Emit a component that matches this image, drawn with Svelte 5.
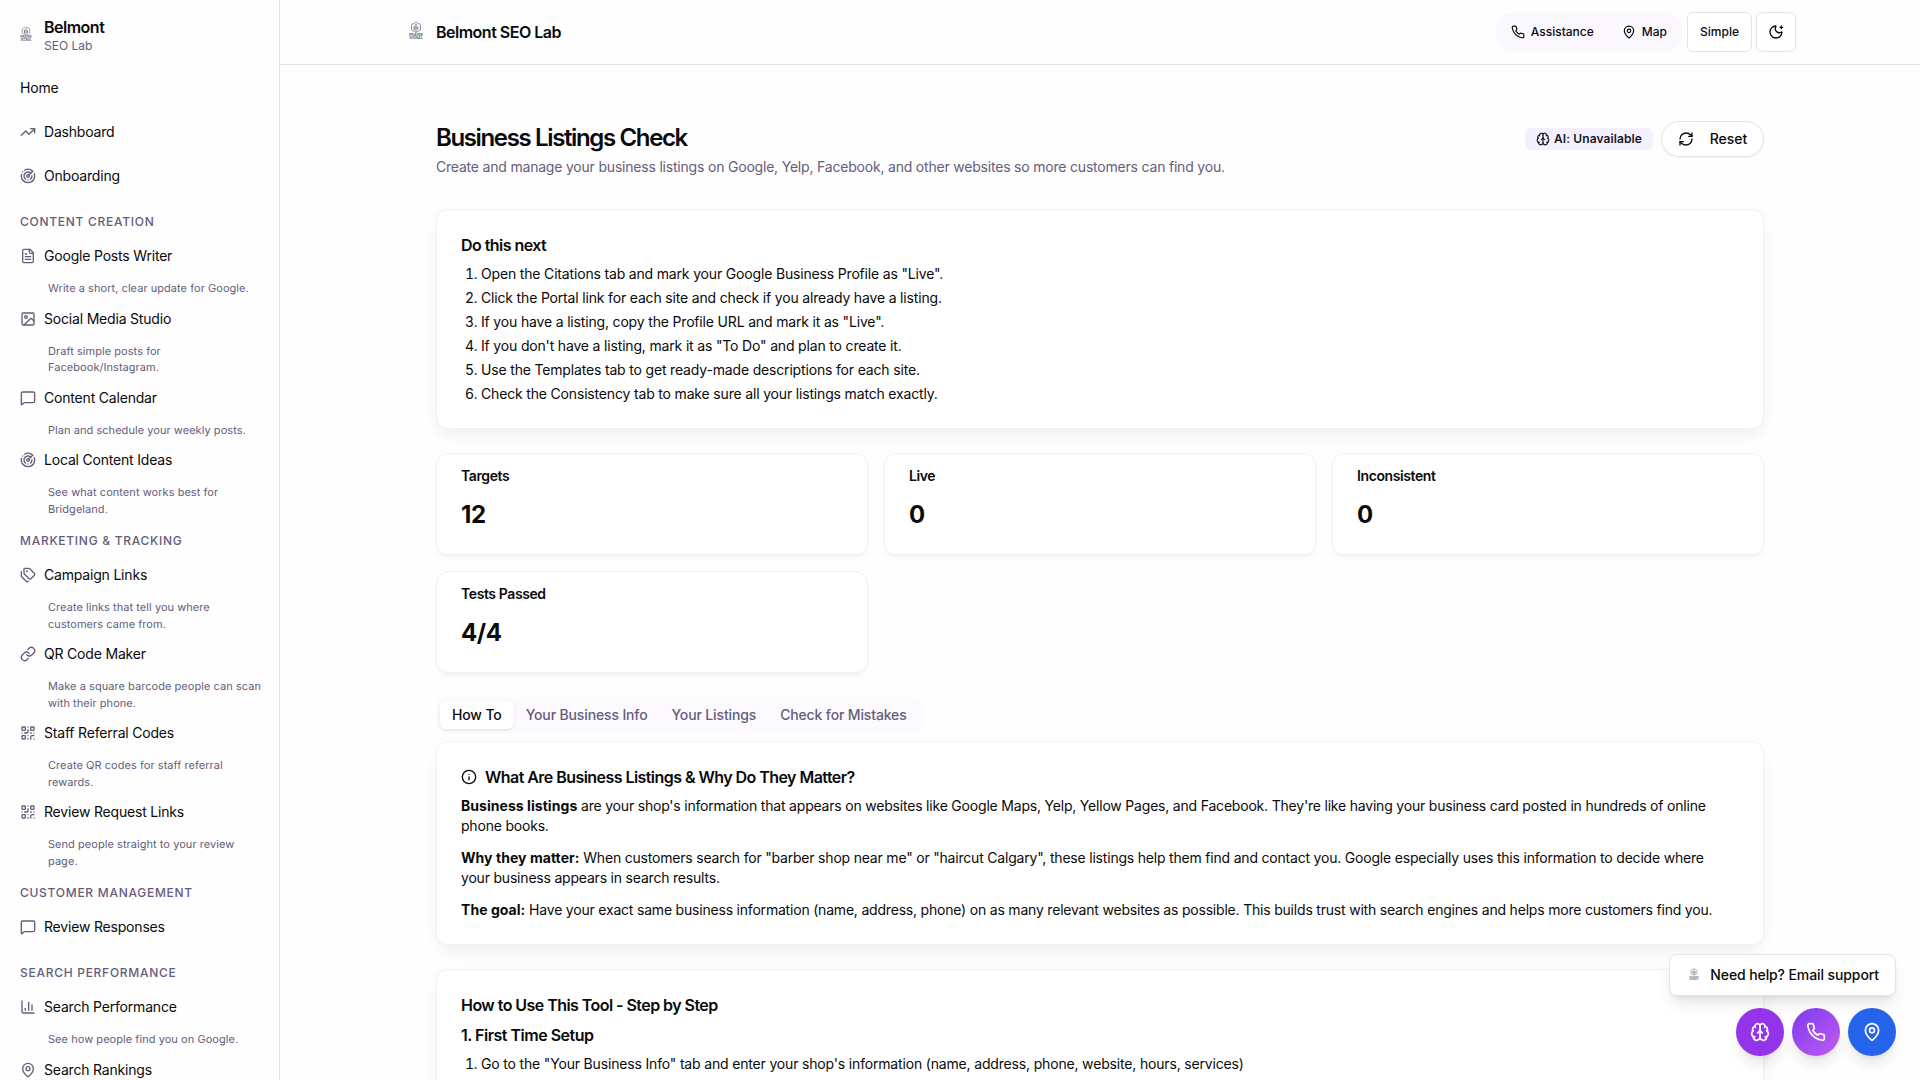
<script>
  const icons = {
    trend: '<path d="M16 7h6v6"/><path d="m22 7-8.5 8.5-5-5L2 17"/>',
    radar: '<path d="M19.07 4.93A10 10 0 0 0 6.99 3.34"/><path d="M4 6h.01"/><path d="M2.29 9.62A10 10 0 1 0 21.31 8.35"/><path d="M16.24 7.76A6 6 0 1 0 8.23 16.67"/><path d="M12 18h.01"/><path d="M17.99 11.66A6 6 0 0 1 15.77 16.67"/><circle cx="12" cy="12" r="2"/><path d="m13.41 10.59 5.66-5.66"/>',
    file: '<path d="M15 2H6a2 2 0 0 0-2 2v16a2 2 0 0 0 2 2h12a2 2 0 0 0 2-2V7Z"/><path d="M14 2v4a2 2 0 0 0 2 2h4"/><path d="M10 9H8"/><path d="M16 13H8"/><path d="M16 17H8"/>',
    image: '<rect width="18" height="18" x="3" y="3" rx="2"/><circle cx="9" cy="9" r="2"/><path d="m21 15-3.086-3.086a2 2 0 0 0-2.828 0L6 21"/>',
    message: '<path d="M22 17a2 2 0 0 1-2 2H6.828a2 2 0 0 0-1.414.586l-2.202 2.202A.71.71 0 0 1 2 21.286V5a2 2 0 0 1 2-2h16a2 2 0 0 1 2 2z"/>',
    tags: '<path d="M13.172 2a2 2 0 0 1 1.414.586l6.71 6.71a2.4 2.4 0 0 1 0 3.408l-4.592 4.592a2.4 2.4 0 0 1-3.408 0l-6.71-6.71A2 2 0 0 1 6 9.172V3a1 1 0 0 1 1-1z"/><path d="M2 7v6.172a2 2 0 0 0 .586 1.414l6.71 6.71a2.4 2.4 0 0 0 3.191.193"/><circle cx="10.5" cy="6.5" r=".5" fill="currentColor"/>',
    link: '<path d="M10 13a5 5 0 0 0 7.54.54l3-3a5 5 0 0 0-7.07-7.07l-1.72 1.71"/><path d="M14 11a5 5 0 0 0-7.54-.54l-3 3a5 5 0 0 0 7.07 7.07l1.71-1.71"/>',
    qr: '<rect width="5" height="5" x="3" y="3" rx="1"/><rect width="5" height="5" x="16" y="3" rx="1"/><rect width="5" height="5" x="3" y="16" rx="1"/><path d="M21 16h-3a2 2 0 0 0-2 2v3"/><path d="M21 21v.01"/><path d="M12 7v3a2 2 0 0 1-2 2H7"/><path d="M3 12h.01"/><path d="M12 3h.01"/><path d="M12 16v.01"/><path d="M16 12h1"/><path d="M21 12v.01"/><path d="M12 21v-1"/>',
    chart: '<path d="M3 3v16a2 2 0 0 0 2 2h16"/><path d="M18 17V9"/><path d="M13 17V5"/><path d="M8 17v-3"/>',
    pin: '<path d="M20 10c0 4.993-5.539 10.193-7.399 11.799a1 1 0 0 1-1.202 0C9.539 20.193 4 14.993 4 10a8 8 0 0 1 16 0"/><circle cx="12" cy="10" r="3"/>',
    phone: '<path d="M22 16.92v3a2 2 0 0 1-2.18 2 19.79 19.79 0 0 1-8.63-3.07 19.5 19.5 0 0 1-6-6 19.79 19.79 0 0 1-3.07-8.67A2 2 0 0 1 4.11 2h3a2 2 0 0 1 2 1.72 12.84 12.84 0 0 0 .7 2.81 2 2 0 0 1-.45 2.11L8.09 9.91a16 16 0 0 0 6 6l1.27-1.27a2 2 0 0 1 2.11-.45 12.84 12.84 0 0 0 2.81.7A2 2 0 0 1 22 16.92z"/>',
    moon: '<path d="M20.985 12.486a9 9 0 1 1-9.473-9.472c.405-.022.617.46.402.803a6 6 0 0 0 8.268 8.268c.344-.215.825-.004.803.401"/><path d="M20 3v4"/><path d="M22 5h-4"/>',
    refresh: '<path d="M3 12a9 9 0 0 1 9-9 9.75 9.75 0 0 1 6.74 2.74L21 8"/><path d="M21 3v5h-5"/><path d="M21 12a9 9 0 0 1-9 9 9.75 9.75 0 0 1-6.74-2.74L3 16"/><path d="M8 16H3v5"/>',
    brain: '<path d="M12 18V5"/><path d="M15 13a4.17 4.17 0 0 1-3-4 4.17 4.17 0 0 1-3 4"/><path d="M17.598 6.5A3 3 0 1 0 12 5a3 3 0 1 0-5.598 1.5"/><path d="M17.997 5.125a4 4 0 0 1 2.526 5.77"/><path d="M18 18a4 4 0 0 0 2-7.464"/><path d="M19.967 17.483A4 4 0 1 1 12 18a4 4 0 1 1-7.967-.517"/><path d="M6 18a4 4 0 0 1-2-7.464"/><path d="M6.003 5.125a4 4 0 0 0-2.526 5.77"/>',
    info: '<circle cx="12" cy="12" r="10"/><path d="M12 16v-4"/><path d="M12 8h.01"/>'
  };

  const sections = [
    {
      title: 'Content Creation',
      items: [
        ['file', 'Google Posts Writer', 'Write a short, clear update for Google.'],
        ['image', 'Social Media Studio', 'Draft simple posts for Facebook/Instagram.'],
        ['message', 'Content Calendar', 'Plan and schedule your weekly posts.'],
        ['radar', 'Local Content Ideas', 'See what content works best for Bridgeland.']
      ]
    },
    {
      title: 'Marketing & Tracking',
      items: [
        ['tags', 'Campaign Links', 'Create links that tell you where customers came from.'],
        ['link', 'QR Code Maker', 'Make a square barcode people can scan with their phone.'],
        ['qr', 'Staff Referral Codes', 'Create QR codes for staff referral rewards.'],
        ['qr', 'Review Request Links', 'Send people straight to your review page.']
      ]
    },
    { title: 'Customer Management', items: [['message', 'Review Responses', '']] },
    {
      title: 'Search Performance',
      items: [
        ['chart', 'Search Performance', 'See how people find you on Google.'],
        ['pin', 'Search Rankings', '']
      ]
    }
  ];

  const nextSteps = [
    'Open the Citations tab and mark your Google Business Profile as "Live".',
    'Click the Portal link for each site and check if you already have a listing.',
    'If you have a listing, copy the Profile URL and mark it as "Live".',
    'If you don\'t have a listing, mark it as "To Do" and plan to create it.',
    'Use the Templates tab to get ready-made descriptions for each site.',
    'Check the Consistency tab to make sure all your listings match exactly.'
  ];

  const stats = [
    ['Targets', '12'],
    ['Live', '0'],
    ['Inconsistent', '0'],
    ['Tests Passed', '4/4']
  ];

  const tabs = ['How To', 'Your Business Info', 'Your Listings', 'Check for Mistakes'];
  let active = $state('How To');
</script>

{#snippet icon(name, size = 16)}
  <svg class="icon" width={size} height={size} viewBox="0 0 24 24" fill="none" stroke="currentColor" stroke-width="2" stroke-linecap="round" stroke-linejoin="round">{@html icons[name]}</svg>
{/snippet}

{#snippet logo(size)}
  <svg class="logo" width={size} height={size} viewBox="0 0 24 24" fill="none">
    <path d="M12 2.300l4.500 2.400v5.200L12 12.500 7.500 9.900V4.700z" stroke="#8b98a4" stroke-width="1" />
    <path d="M12 4v7.500M10.200 6v4M13.800 6.500v3" stroke="#667686" stroke-width="1.100" />
    <text x="12" y="16" text-anchor="middle" textLength="14" lengthAdjust="spacingAndGlyphs" class="logo-text">PRAIRIE</text>
    <text x="12" y="19.200" text-anchor="middle" textLength="13.500" lengthAdjust="spacingAndGlyphs" class="logo-text">SIGNAL</text>
  </svg>
{/snippet}

<div class="app">
  <aside class="sidebar">
    <div class="brand">
      {@render logo(20)}
      <div>
        <div class="brand-name">Belmont</div>
        <div class="brand-sub">SEO Lab</div>
      </div>
    </div>
    <nav>
      <a class="item">Home</a>
      <a class="item">{@render icon('trend')}Dashboard</a>
      <a class="item">{@render icon('radar')}Onboarding</a>
      {#each sections as s}
        <div class="section">{s.title}</div>
        {#each s.items as [ic, label, desc]}
          <a class="item">{@render icon(ic)}{label}</a>
          {#if desc}<p class="desc">{desc}</p>{/if}
        {/each}
      {/each}
    </nav>
  </aside>

  <div class="page">
    <header class="topbar">
      <div class="topbar-inner">
        <div class="title">{@render logo(24)}<span>Belmont SEO Lab</span></div>
        <div class="actions">
          <div class="pill">
            <button class="pill-btn">{@render icon('phone', 14)}Assistance</button>
            <button class="pill-btn">{@render icon('pin', 14)}Map</button>
          </div>
          <button class="box simple">Simple</button>
          <button class="box theme">{@render icon('moon')}</button>
        </div>
      </div>
    </header>

    <main>
      <div class="heading">
        <div>
          <h1>Business Listings Check</h1>
          <p>Create and manage your business listings on Google, Yelp, Facebook, and other websites so more customers can find you.</p>
        </div>
        <div class="heading-actions">
          <span class="badge">{@render icon('brain', 14)}AI: Unavailable</span>
          <button class="reset">{@render icon('refresh')}Reset</button>
        </div>
      </div>

      <section class="card">
        <h2>Do this next</h2>
        <ol>
          {#each nextSteps as step}<li>{step}</li>{/each}
        </ol>
      </section>

      <div class="stats">
        {#each stats as [label, value]}
          <div class="stat">
            <div class="stat-label">{label}</div>
            <div class="stat-value">{value}</div>
          </div>
        {/each}
      </div>

      <div class="tabs">
        {#each tabs as t}
          <button class="tab" class:active={t === active} onclick={() => (active = t)}>{t}</button>
        {/each}
      </div>

      <section class="card info">
        <h2>{@render icon('info')}What Are Business Listings &amp; Why Do They Matter?</h2>
        <p><strong>Business listings</strong> are your shop's information that appears on websites like Google Maps, Yelp, Yellow Pages, and Facebook. They're like having your business card posted in hundreds of online phone books.</p>
        <p><strong>Why they matter:</strong> When customers search for "barber shop near me" or "haircut Calgary", these listings help them find and contact you. Google especially uses this information to decide where your business appears in search results.</p>
        <p><strong>The goal:</strong> Have your exact same business information (name, address, phone) on as many relevant websites as possible. This builds trust with search engines and helps more customers find you.</p>
      </section>

      <section class="card steps">
        <h2>How to Use This Tool - Step by Step</h2>
        <h3>1. First Time Setup</h3>
        <ol>
          <li>Go to the "Your Business Info" tab and enter your shop's information (name, address, phone, website, hours, services)</li>
        </ol>
      </section>
    </main>
  </div>

  <div class="floating">
    <a class="support">{@render logo(16)}Need help? Email support</a>
    <div class="fabs">
      <button class="fab violet">{@render icon('brain', 20)}</button>
      <button class="fab gradient">{@render icon('phone', 20)}</button>
      <button class="fab blue">{@render icon('pin', 20)}</button>
    </div>
  </div>
</div>

<style>
  :global(body) {
    background: #fefefe;
    overflow: hidden;
  }
  .app, .app * { box-sizing: border-box; }
  .app {
    display: flex;
    height: 1080px;
    overflow: hidden;
    font-family: Inter, sans-serif;
    font-size: 14px;
    line-height: 20px;
    letter-spacing: -0.19px;
    color: #0a0a0b;
    background: #fefefe;
  }
  button { font: inherit; letter-spacing: inherit; color: inherit; border: 0; background: none; padding: 0; }
  h1, h2, h3, p, ol { margin: 0; padding: 0; }
  .icon, .logo { flex: none; display: block; }
  .logo-text { font: 700 3.6px Inter, sans-serif; fill: #5d6d7d; letter-spacing: 0; }

  .sidebar {
    width: 280px;
    flex: none;
    border-right: 1px solid #e4e4e7;
    overflow: hidden;
  }
  .brand { display: flex; align-items: center; gap: 8px; padding: 3px 16px 0; height: 66px; }
  .brand-name { font-size: 16px; font-weight: 600; line-height: 22px; letter-spacing: -0.5px; }
  .brand-sub { font-size: 12px; line-height: 16px; letter-spacing: 0; color: #655d7a; }
  .item { display: flex; align-items: center; gap: 8px; height: 44px; padding: 0 20px; }
  .item .icon { color: #655d7a; }
  .section {
    padding: 16px 20px 4px;
    font-size: 12px;
    line-height: 16px;
    font-weight: 500;
    letter-spacing: 0.72px;
    text-transform: uppercase;
    color: #655d7a;
  }
  .desc {
    padding: 2px 16px 0 48px;
    font-size: 11px;
    line-height: 16.5px;
    letter-spacing: 0.05px;
    text-rendering: geometricPrecision;
    color: #655d7a;
  }

  .page { flex: 1; min-width: 0; }
  .topbar { height: 65px; border-bottom: 1px solid #e4e4e7; }
  .topbar-inner {
    display: flex;
    align-items: center;
    justify-content: space-between;
    max-width: 1440px;
    height: 64px;
    margin: 0 auto;
    padding: 0 24px;
  }
  .title { display: flex; align-items: center; gap: 8px; font-size: 16px; font-weight: 600; letter-spacing: -0.5px; }
  .actions { display: flex; align-items: center; gap: 4px; font-size: 12px; font-weight: 500; letter-spacing: 0; }
  .pill { display: flex; align-items: center; gap: 4px; height: 40px; padding: 4px; border-radius: 20px; background: #faf7ff; }
  .pill-btn { display: flex; align-items: center; gap: 6px; height: 32px; padding: 0 12px; }
  .box { display: flex; align-items: center; justify-content: center; height: 40px; border: 1px solid #e4e4e7; border-radius: 6px; background: #fff; }
  .simple { width: 65px; }
  .theme { width: 40px; }

  main { width: 1328px; margin: 0 auto; padding-top: 56px; }
  .heading { display: flex; justify-content: space-between; }
  h1 { padding-top: 1px; font-size: 24px; line-height: 32px; font-weight: 600; letter-spacing: -1.36px; }
  .heading p { margin-top: 3px; letter-spacing: -0.2px; color: #655d7a; }
  .heading-actions { display: flex; align-items: center; gap: 8px; height: 36px; }
  .badge { display: flex; align-items: center; gap: 4px; height: 22px; padding: 0 11px; border-radius: 6px; background: #f5f0ff; color: #18161d; font-size: 12px; font-weight: 600; letter-spacing: 0.1px; }
  .reset {
    display: flex; align-items: center; justify-content: center; gap: 16px;
    width: 103px; height: 36px;
    border: 1px solid #e4e4e7; border-radius: 18px; background: #fff;
    font-weight: 500; letter-spacing: 0; box-shadow: 0 1px 2px rgba(0, 0, 0, 0.05);
  }

  .card {
    padding: 24px;
    border: 1px solid #f1f1f3;
    border-radius: 12px;
    background: #fff;
    box-shadow: 0 10px 15px -3px rgba(0, 0, 0, 0.04), 0 4px 24px -2px rgba(0, 0, 0, 0.03);
  }
  .heading + .card { margin-top: 32px; }
  h2, h3 { font-size: 16px; line-height: 22px; font-weight: 600; letter-spacing: -0.55px; }
  h2 { display: flex; align-items: center; gap: 8px; }
  ol { margin-top: 8px; padding-left: 20px; letter-spacing: -0.17px; }
  li + li { margin-top: 4px; }

  .stats { display: grid; grid-template-columns: repeat(3, 1fr); gap: 16px; margin-top: 24px; }
  .stat {
    height: 102px;
    padding: 12px 24px;
    border: 1px solid #f1f1f3;
    border-radius: 12px;
    background: #fff;
    box-shadow: 0 4px 6px -1px rgba(0, 0, 0, 0.04), 0 2px 4px -2px rgba(0, 0, 0, 0.04);
  }
  .stat-label { font-weight: 600; letter-spacing: -0.4px; }
  .stat-value { margin-top: 13px; font-size: 24px; line-height: 32px; font-weight: 700; letter-spacing: -0.4px; }

  .tabs { display: inline-flex; align-items: center; height: 36px; margin-top: 24px; padding: 4px; border-radius: 8px; background: #fcfaff; vertical-align: top; }
  .tab { height: 28px; padding: 0 12px; border-radius: 6px; font-weight: 500; letter-spacing: -0.14px; color: #655d7a; }
  .tab.active { background: #fff; color: #0a0a0b; box-shadow: 0 1px 3px rgba(0, 0, 0, 0.12); }
  .info { margin-top: 8px; }
  .info p { margin-top: 8px; padding-right: 16px; letter-spacing: -0.2px; }
  .info p + p { margin-top: 12px; }
  .info strong { font-weight: 700; letter-spacing: 0.05px; }
  .steps { margin-top: 24px; height: 300px; }
  h3 { margin-top: 8px; letter-spacing: -0.5px; }

  .floating { position: absolute; top: 954px; right: 24px; display: flex; flex-direction: column; align-items: flex-end; gap: 12px; }
  .support {
    display: flex; align-items: center; gap: 8px;
    height: 42px; padding: 0 16px;
    border: 1px solid #e4e4e7; border-radius: 8px; background: #fff;
    font-weight: 500; letter-spacing: -0.1px;
    box-shadow: 0 10px 15px -3px rgba(0, 0, 0, 0.1), 0 4px 6px -4px rgba(0, 0, 0, 0.1);
  }
  .fabs { display: flex; gap: 8px; }
  .fab {
    display: flex; align-items: center; justify-content: center;
    width: 48px; height: 48px; border-radius: 50%; color: #fff;
    box-shadow: 0 10px 15px -3px rgba(0, 0, 0, 0.1), 0 4px 6px -4px rgba(0, 0, 0, 0.1);
  }
  .violet { background: #9333ea; }
  .gradient { background: linear-gradient(135deg, #7c3aed, #c05cf5); }
  .blue { background: #2563eb; }
</style>
